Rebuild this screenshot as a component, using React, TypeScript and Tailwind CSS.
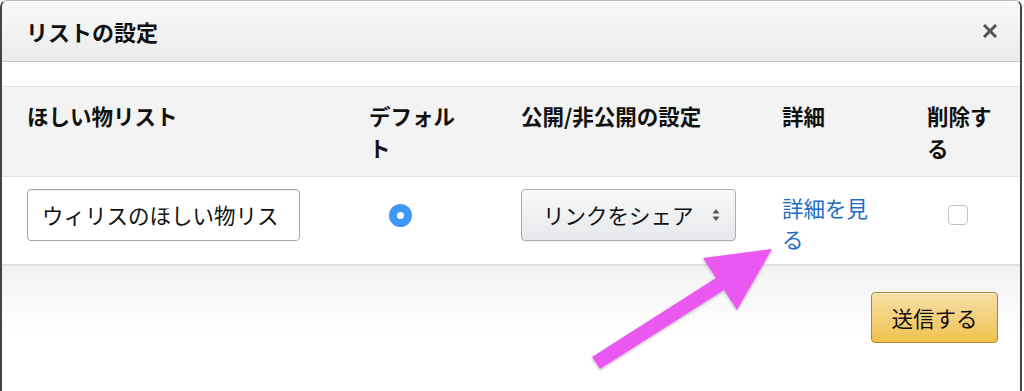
import React from "react";

export default function App() {
  return (
    <div
      className="relative w-[1024px] h-[391px] bg-white overflow-hidden text-[#111]"
      style={{ fontFamily: '"Noto Sans CJK JP", "Noto Sans", sans-serif' }}
    >
      <div className="flex flex-col w-[1022px] h-[391px] border-x-2 border-t border-[#444] border-t-[#bbb] rounded-t-[7px] overflow-hidden">
        {/* Header */}
        <div className="flex items-center justify-between h-[61px] shrink-0 pl-[24px] pr-[20px] bg-linear-to-b from-[#f9f9f9] to-[#ebebeb] border-b border-[#c6c6c6]">
          <div className="text-[22px] font-bold leading-none">リストの設定</div>
          <svg width="14" height="14" viewBox="0 0 14 14" className="mr-[3px]">
            <path d="M2 2 L12 12 M12 2 L2 12" stroke="#555" strokeWidth="3" strokeLinecap="square" />
          </svg>
        </div>
        {/* spacer */}
        <div className="h-[24px] shrink-0 bg-white" />
        {/* table header row */}
        <div className="grid grid-cols-[342px_152px_261px_145px_80px] pl-[25px] h-[90px] shrink-0 pt-[13px] border-t border-[#e3e3e3] bg-[#f3f3f3] text-[21.5px] font-bold leading-[32px]">
          <div>ほしい物リスト</div>
          <div className="w-[96px]">デフォルト</div>
          <div className="whitespace-nowrap">公開/非公開の設定</div>
          <div>詳細</div>
          <div className="w-[70px]">削除する</div>
        </div>
        {/* body row */}
        <div className="grid grid-cols-[342px_152px_261px_145px_80px] pl-[25px] h-[88px] shrink-0 pt-[12px] border-t border-[#e3e3e3] bg-white text-[21.5px]">
          <div>
            <div className="w-[273px] h-[52px] border border-[#a6a6a6] rounded-[4px] flex items-center px-[14px] leading-none shadow-[inset_0_1px_0_rgba(0,0,0,0.05)]">
              <div className="w-full overflow-hidden whitespace-nowrap">ウィリスのほしい物リスト</div>
            </div>
          </div>
          <div className="flex items-center h-[52px]">
            <div className="ml-[20px] w-[23px] h-[23px] rounded-full bg-[#4099f7] flex items-center justify-center">
              <div className="w-[7px] h-[7px] rounded-full bg-white" />
            </div>
          </div>
          <div>
            <div className="w-[215px] h-[52px] border border-[#a9adb3] rounded-[4px] bg-linear-to-b from-[#f8f9fa] to-[#e6e8eb] flex items-center justify-between pl-[21px] pr-[15px] leading-none shadow-[0_1px_0_rgba(0,0,0,0.05)]">
              <span className="whitespace-nowrap">リンクをシェア</span>
              <svg width="8" height="14" viewBox="0 0 8 14">
                <path d="M4 1 L7.5 5.5 L0.5 5.5 Z" fill="#555" />
                <path d="M4 13 L7.5 8.5 L0.5 8.5 Z" fill="#555" />
              </svg>
            </div>
          </div>
          <div>
            <div className="w-[96px] mt-[3px] leading-[31px] text-[#1f6cc6]">詳細を見る</div>
          </div>
          <div className="flex items-center h-[52px]">
            <div className="ml-[21px] w-[20px] h-[20px] rounded-[4px] border border-[#c4c4c4] bg-white" />
          </div>
        </div>
        {/* footer */}
        <div className="flex-1 flex justify-end items-start pt-[27px] pr-[22px] border-t border-[#dcdcdc] bg-linear-to-b from-[#f2f2f2] to-white to-[55%] shadow-[inset_0_2px_2px_rgba(0,0,0,0.04)]">
          <button className="w-[127px] h-[51px] rounded-[4px] border border-[#a88734] bg-linear-to-b from-[#f7dfa5] to-[#f0c14b] text-[21.5px] leading-none text-[#111] shadow-[inset_0_1px_0_rgba(255,255,255,0.6)]">
            送信する
          </button>
        </div>
      </div>
      {/* annotation arrow */}
      <svg className="absolute left-0 top-0 pointer-events-none" width="1024" height="391" viewBox="0 0 1024 391">
        <defs>
          <filter id="sh" x="-10%" y="-10%" width="120%" height="120%">
            <feDropShadow dx="0" dy="1" stdDeviation="1.5" floodColor="#000" floodOpacity="0.3" />
          </filter>
        </defs>
        <polygon
          points="592,357 716,278 703,258 772,249 737,310 724,290 600,369"
          fill="#ea59f1"
          filter="url(#sh)"
        />
      </svg>
    </div>
  );
}
